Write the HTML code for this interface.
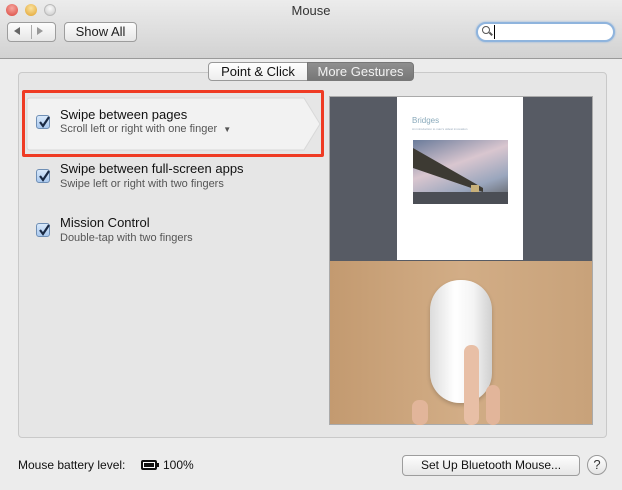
<!DOCTYPE html>
<html><head><style>
*{margin:0;padding:0;box-sizing:border-box}
body{width:622px;height:490px;overflow:hidden;background:#ececec;font-family:"Liberation Sans",sans-serif;position:relative;color:#111}
.a{position:absolute}
.tb{left:0;top:0;width:622px;height:59px;background:linear-gradient(#ececec,#d2d2d2);border-bottom:1px solid #9a9a9a}
.light{width:12px;height:12px;border-radius:50%;top:4px}
.btn{background:linear-gradient(#fdfdfd,#e6e6e6);border:1px solid #9d9d9d;border-radius:4px;font-size:13px;text-align:center}
.cb{width:14px;height:14px;border:1px solid #6f8fb5;border-radius:3px;background:linear-gradient(#d9e9fb,#a9c8ee)}
.cb svg{position:absolute;left:1px;top:0}
.t{font-size:13px;color:#111}
.s{font-size:11px;color:#555}
</style></head><body>
<div class="a tb"></div>
<div class="a light" style="left:6px;background:radial-gradient(circle at 50% 35%,#f7a7a0,#d9453c)"></div>
<div class="a light" style="left:25px;background:radial-gradient(circle at 50% 35%,#fbe3a0,#e0a12d)"></div>
<div class="a light" style="left:44px;background:radial-gradient(circle at 50% 35%,#fafafa,#c8c8c8);border:1px solid #bbb"></div>
<div class="a" style="left:0;top:3px;width:622px;text-align:center;font-size:13px;color:#333">Mouse</div>
<div class="a btn" style="left:7px;top:22px;width:49px;height:20px"></div>
<div class="a" style="left:31px;top:25px;width:1px;height:14px;background:#aaa"></div>
<div class="a" style="left:14px;top:27px;width:0;height:0;border-top:4px solid transparent;border-bottom:4px solid transparent;border-right:6px solid #666"></div>
<div class="a" style="left:37px;top:27px;width:0;height:0;border-top:4px solid transparent;border-bottom:4px solid transparent;border-left:6px solid #999"></div>
<div class="a btn" style="left:64px;top:22px;width:73px;height:20px;line-height:18px;color:#222">Show All</div>
<div class="a" style="left:476px;top:22px;width:139px;height:20px;border-radius:10px;background:#fff;border:2px solid #8fb4dd;box-shadow:0 0 2px #8fb4dd"></div>
<div class="a" style="left:482px;top:26px;width:8px;height:8px;border:1.5px solid #555;border-radius:50%"></div>
<div class="a" style="left:489px;top:33px;width:4px;height:1.5px;background:#555;transform:rotate(45deg)"></div>
<div class="a" style="left:494px;top:25px;width:1px;height:14px;background:#000"></div>

<div class="a" style="left:18px;top:72px;width:589px;height:366px;border:1px solid #c9c9c9;border-radius:4px;background:#e6e6e6"></div>
<div class="a" style="left:208px;top:62px;width:100px;height:19px;border:1px solid #999;border-radius:4px 0 0 4px;background:linear-gradient(#fff,#eee);font-size:13px;text-align:center;line-height:17px">Point &amp; Click</div>
<div class="a" style="left:307px;top:62px;width:107px;height:19px;border:1px solid #777;border-radius:0 4px 4px 0;background:linear-gradient(#8f8f8f,#777);color:#f2f2f2;font-size:13px;text-align:center;line-height:17px">More Gestures</div>

<svg class="a" style="left:26px;top:97px" width="296" height="55"><path d="M1 4 Q1 1 4 1 H278 L294 27 L278 53 H4 Q1 53 1 50 Z" fill="#f2f2f2" stroke="#d8d8d8"/></svg>
<div class="a" style="left:22px;top:90px;width:302px;height:67px;border:3px solid #ef3b24;border-radius:2px"></div>

<div class="a cb" style="left:36px;top:115px"><svg width="12" height="12"><path d="M2 6 L5 10 L11 1" stroke="#1a2a44" stroke-width="2.2" fill="none"/></svg></div>
<div class="a t" style="left:60px;top:107px">Swipe between pages</div>
<div class="a s" style="left:60px;top:123px">Scroll left or right with one finger&nbsp;&nbsp;<span style="font-size:8px">▼</span></div>
<div class="a cb" style="left:36px;top:169px"><svg width="12" height="12"><path d="M2 6 L5 10 L11 1" stroke="#1a2a44" stroke-width="2.2" fill="none"/></svg></div>
<div class="a t" style="left:60px;top:161px">Swipe between full-screen apps</div>
<div class="a s" style="left:60px;top:178px">Swipe left or right with two fingers</div>
<div class="a cb" style="left:36px;top:223px"><svg width="12" height="12"><path d="M2 6 L5 10 L11 1" stroke="#1a2a44" stroke-width="2.2" fill="none"/></svg></div>
<div class="a t" style="left:60px;top:215px">Mission Control</div>
<div class="a s" style="left:60px;top:232px">Double-tap with two fingers</div>

<div class="a" style="left:329px;top:96px;width:264px;height:329px;border:1px solid #aaa;background:#c9a37b"></div>
<div class="a" style="left:330px;top:97px;width:262px;height:164px;background:#575b64"></div>
<div class="a" style="left:397px;top:97px;width:126px;height:163px;background:#fff"></div>
<div class="a" style="left:412px;top:116px;font-size:8px;color:#8aaabb">Bridges</div>
<div class="a" style="left:412px;top:127px;font-size:3px;color:#9ab">An introduction to man's oldest innovation</div>
<div class="a" style="left:413px;top:140px;width:95px;height:64px;background:linear-gradient(160deg,#6a7b9a 0%,#d9c6cf 40%,#9aa6bd 70%,#555 100%)"></div>
<svg class="a" style="left:413px;top:140px" width="95" height="64"><path d="M0 8 L70 48 L70 52 L0 28 Z" fill="#3d3a33"/><rect x="58" y="45" width="8" height="12" fill="#c7b07a"/><rect x="0" y="52" width="95" height="12" fill="#4b4e55"/></svg>
<div class="a" style="left:330px;top:261px;width:262px;height:163px;background:linear-gradient(90deg,#c39a70,#d2ad86,#c8a27a)"></div>
<div class="a" style="left:430px;top:280px;width:62px;height:123px;border-radius:30px;background:linear-gradient(90deg,#dcdcdc,#fff 40%,#f4f4f4 70%,#d0d0d0);box-shadow:0 2px 4px rgba(0,0,0,.2)"></div>
<div class="a" style="left:464px;top:345px;width:15px;height:80px;border-radius:7px;background:#e8bfa6"></div>
<div class="a" style="left:486px;top:385px;width:14px;height:40px;border-radius:7px;background:#e2b59a"></div>
<div class="a" style="left:412px;top:400px;width:16px;height:25px;border-radius:7px;background:#e2b59a"></div>

<div class="a" style="left:18px;top:458px;font-size:12px">Mouse battery level:</div>
<div class="a" style="left:141px;top:460px;width:16px;height:10px;border:2px solid #111;border-radius:2px;background:#111;box-shadow:inset 0 0 0 1px #fff"></div>
<div class="a" style="left:157px;top:463px;width:2px;height:4px;background:#111"></div>
<div class="a" style="left:163px;top:458px;font-size:12px">100%</div>
<div class="a btn" style="left:402px;top:455px;width:178px;height:21px;line-height:19px;font-size:12px">Set Up Bluetooth Mouse...</div>
<div class="a" style="left:587px;top:455px;width:20px;height:20px;border-radius:50%;border:1px solid #999;background:linear-gradient(#fff,#e4e4e4);font-size:13px;text-align:center;line-height:18px;color:#333">?</div>
</body></html>
